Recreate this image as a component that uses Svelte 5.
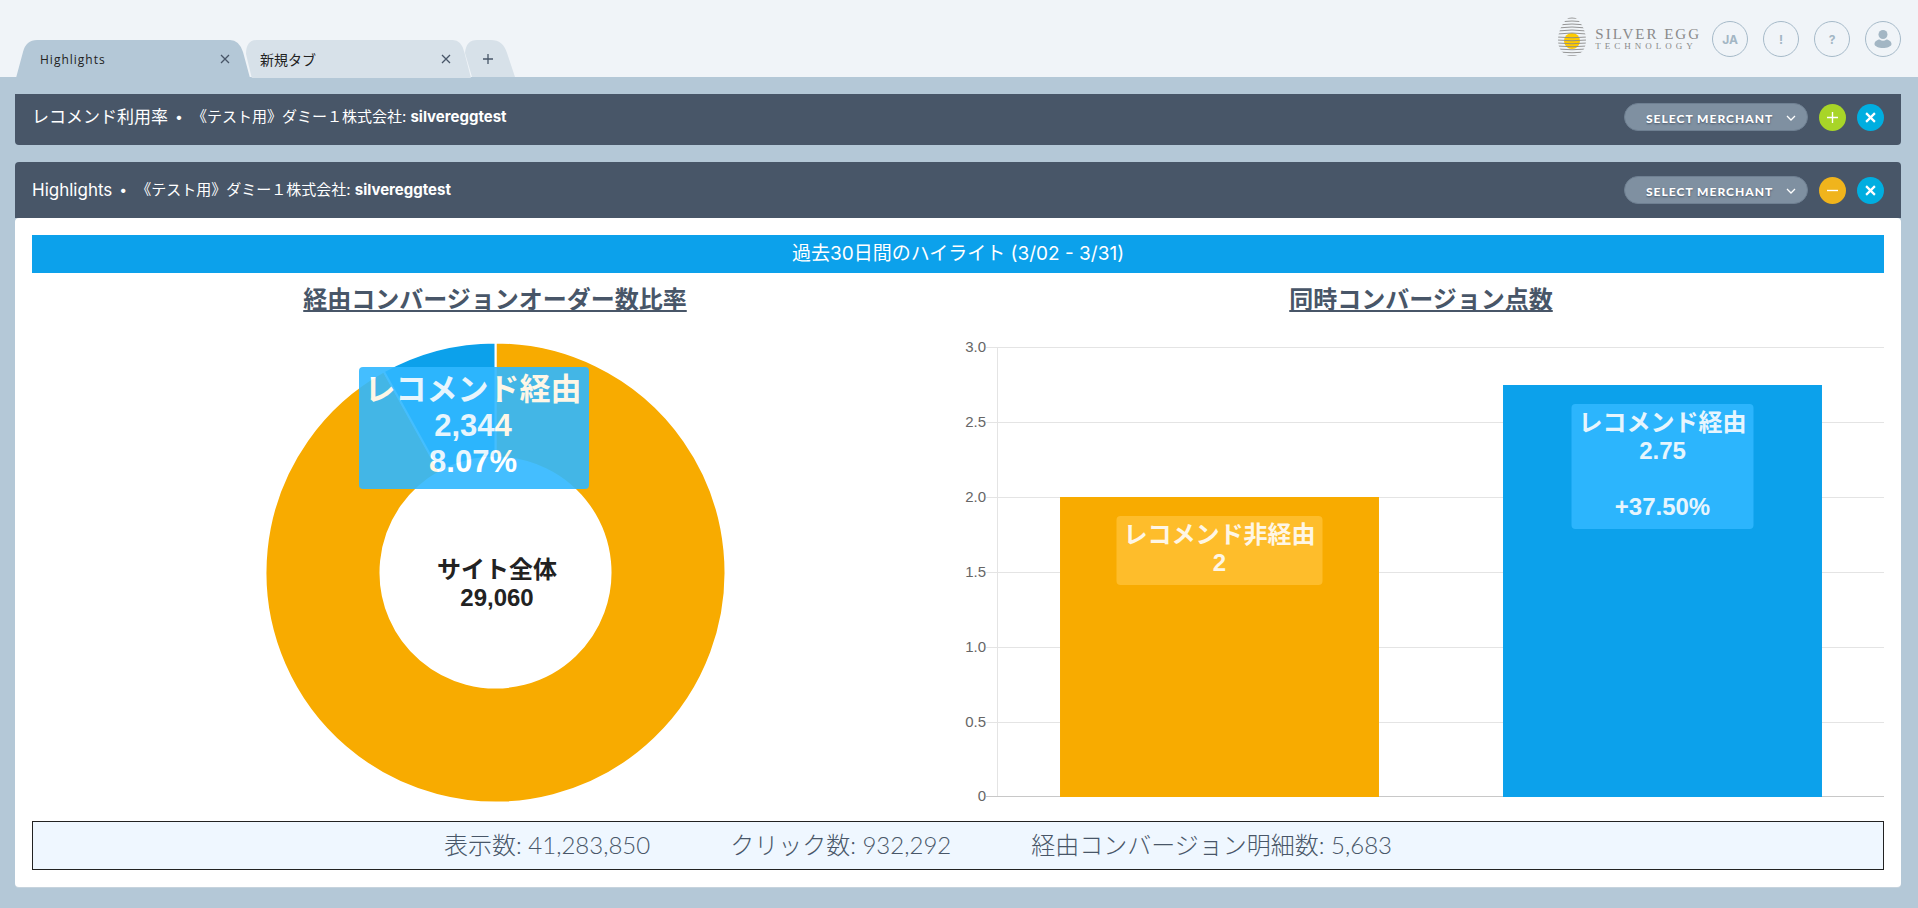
<script lang="ts">
type Summary = { label: string; value: number };
type Bar = { label: string; value: number; diff?: string; color: string; tip: string };

const CX = 463.5;
const CY = 251.5;
const OUTER_R = 230;
const INNER_R = 115;

const PLOT_TOP = 26;
const PLOT_BOTTOM = 475;
const PLOT_LEFT = 40;
const PLOT_RIGHT = 926;
const MAX_VALUE = 3;
const BAR_RATIO = 0.72;

const merchant = "《テスト用》ダミー１株式会社:";
const account = "silvereggtest";

const total = 29060;
const recommended = 2344;
const share = recommended / total;

const ticks = [3, 2.5, 2, 1.5, 1, 0.5, 0];

const bars: Bar[] = [
  { label: "レコメンド非経由", value: 2, color: "#f8ab00", tip: "#ffbf30" },
  { label: "レコメンド経由", value: 2.75, diff: "+37.50%", color: "#0ca1eb", tip: "#30b8ff" },
];

const summary: Summary[] = [
  { label: "表示数", value: 41283850 },
  { label: "クリック数", value: 932292 },
  { label: "経由コンバージョン明細数", value: 5683 },
];

let tabs = $state([
  { name: "Highlights", active: true },
  { name: "新規タブ", active: false },
]);

const fmt = (n: number) => n.toLocaleString("en-US");

function yFor(value: number): number {
  return Math.ceil(PLOT_BOTTOM - ((PLOT_BOTTOM - PLOT_TOP) * value) / MAX_VALUE);
}

function point(r: number, turn: number): string {
  const a = turn * 2 * Math.PI - Math.PI / 2;
  return `${(CX + r * Math.cos(a)).toFixed(2)},${(CY + r * Math.sin(a)).toFixed(2)}`;
}

function slice(from: number, to: number): string {
  const large = to - from > 0.5 ? 1 : 0;
  return `M${point(OUTER_R, from)} A${OUTER_R},${OUTER_R} 0 ${large} 1 ${point(OUTER_R, to)} L${point(INNER_R, to)} A${INNER_R},${INNER_R} 0 ${large} 0 ${point(INNER_R, from)} Z`;
}

const slot = (PLOT_RIGHT - PLOT_LEFT) / bars.length;
const barWidth = slot * BAR_RATIO;

function selectTab(index: number) {
  tabs.forEach((t, i) => (t.active = i === index));
}

// stripes of the egg mark, clipped to its outline
const stripes = Array.from({ length: 13 }, (_, i) => 1 + i * 3);
</script>

{#snippet cross()}
  <svg class="glyph" viewBox="0 0 10 10" aria-hidden="true"><path d="M1 1 9 9M9 1 1 9" /></svg>
{/snippet}

{#snippet panelHead(title: string, open: boolean)}
  <h2>
    <span class="title">{title}</span><span class="dot">•</span>
    <span class="merchant">{merchant} <b>{account}</b></span>
  </h2>
  <div class="tools">
    <div class="picker">
      <select aria-label="Select merchant">
        <option>SELECT MERCHANT</option>
      </select>
      <svg class="chevron" viewBox="0 0 10 6" aria-hidden="true"><path d="M1 1 5 5 9 1" /></svg>
    </div>
    {#if open}
      <button class="round amber" aria-label="Collapse">
        <svg viewBox="0 0 12 12" aria-hidden="true"><path d="M0 6H12" /></svg>
      </button>
    {:else}
      <button class="round green" aria-label="Expand">
        <svg viewBox="0 0 12 12" aria-hidden="true"><path d="M0 6H12M6 0V12" /></svg>
      </button>
    {/if}
    <button class="round blue" aria-label="Close panel">{@render cross()}</button>
  </div>
{/snippet}

<header>
  <nav class="tabs">
    {#each tabs as tab, i}
      <div class="tab" class:active={tab.active}>
        <svg class="shape" viewBox="0 0 234 38" preserveAspectRatio="none" aria-hidden="true">
          {#if i === 0}
            <path d="M0 38 7 12Q10 0 21 0H214Q223 0 227 12L234 38Z" />
          {:else}
            <path d="M6 38 0 14Q0 0 11 0H215Q224 0 227 12L234 38Z" />
          {/if}
        </svg>
        <button class="name" onclick={() => selectTab(i)}>{tab.name}</button>
        <button class="close" aria-label="Close tab">{@render cross()}</button>
      </div>
    {/each}
    <button class="tab add" aria-label="Add tab">
      <svg class="shape" viewBox="0 0 50 38" preserveAspectRatio="none" aria-hidden="true">
        <path d="M7 37 0 13Q1 0 12 0H26Q38 0 42 13L50 37Z" />
      </svg>
      <svg class="glyph" viewBox="0 0 10 10" aria-hidden="true"><path d="M0 5H10M5 0V10" /></svg>
    </button>
  </nav>

  <div class="account">
    <a class="logo" href="#home" aria-label="Silver Egg Technology">
      <svg class="egg" viewBox="0 0 30 40" aria-hidden="true">
        <defs>
          <clipPath id="egg-outline">
            <path d="M15 0C22 0 29 13 29 23C29 33 23 39 15 39S1 33 1 23C1 13 8 0 15 0Z" />
          </clipPath>
        </defs>
        <circle cx="15" cy="24" r="8" fill="#ffcb00" />
        <g clip-path="url(#egg-outline)">
          {#each stripes as y, i}
            <path class="stripe" d="M0 {y + 1}Q15 {y + (i < 6 ? -1 : 2.5)} 30 {y + 1}" />
          {/each}
        </g>
      </svg>
      <span class="brand">
        <span class="brand-top">SILVER EGG</span>
        <span class="brand-sub">TECHNOLOGY</span>
      </span>
    </a>
    <button class="ring">JA</button>
    <button class="ring">!</button>
    <button class="ring">?</button>
    <button class="ring" aria-label="User">
      <svg class="user" viewBox="0 0 18 18" aria-hidden="true">
        <circle cx="9" cy="4.5" r="4.5" />
        <path d="M0.5 14C0.5 11 4 9.5 5.5 9.5Q9 12 12.5 9.5C14 9.5 17.5 11 17.5 14C17.5 16.5 13 18 9 18S0.5 16.5 0.5 14Z" />
      </svg>
    </button>
  </div>
</header>

<main>
  <section class="panel collapsed">
    <div class="head">{@render panelHead("レコメンド利用率", false)}</div>
  </section>

  <section class="panel">
    <div class="head">{@render panelHead("Highlights", true)}</div>
    <div class="body">
      <div class="banner">過去30日間のハイライト (3/02 - 3/31)</div>

      <div class="charts">
        <div class="chart">
          <h3>経由コンバージョンオーダー数比率</h3>
          <svg viewBox="0 0 926 500" role="img" aria-label="経由コンバージョンオーダー数比率">
            <path class="slice" d={slice(0, 1 - share)} fill="#f8ab00" />
            <path class="slice" d={slice(1 - share, 1)} fill="#0ca1eb" />
            <g class="center">
              <text x="465" y="257">サイト全体</text>
              <text x="465" y="285">{fmt(total)}</text>
            </g>
            <g class="tip large">
              <rect x="327" y="46" width="230" height="122" rx="4" fill="#30b8ff" />
              <text x="441" y="79">レコメンド経由</text>
              <text x="441" y="115">{fmt(recommended)}</text>
              <text x="441" y="151">{(share * 100).toFixed(2)}%</text>
            </g>
          </svg>
        </div>

        <div class="chart">
          <h3>同時コンバージョン点数</h3>
          <svg viewBox="0 0 926 500" role="img" aria-label="同時コンバージョン点数">
            {#each ticks as tick}
              {@const y = yFor(tick) + 0.5}
              <line class={tick === 0 ? "grid base" : "grid"} x1="28" x2={PLOT_RIGHT} y1={y} y2={y} />
              <text class="tick" x="28" y={y + 4}>{tick === 0 ? "0" : tick.toFixed(1)}</text>
            {/each}
            <line class="grid" x1="39.5" x2="39.5" y1={PLOT_TOP} y2={PLOT_BOTTOM} />
            {#each bars as bar, i}
              {@const mid = PLOT_LEFT + slot * (i + 0.5)}
              {@const top = yFor(bar.value)}
              {@const tipWidth = bar.label.length * 24 + 14}
              <rect x={mid - barWidth / 2} y={top} width={barWidth} height={PLOT_BOTTOM - top + 1} fill={bar.color} />
              <g class="tip">
                <rect
                  x={mid - tipWidth / 2}
                  y={top + 19}
                  width={tipWidth}
                  height={bar.diff ? 125 : 69}
                  rx="4"
                  fill={bar.tip}
                />
                <text x={mid} y={top + 46}>{bar.label}</text>
                <text x={mid} y={top + 74}>{bar.value}</text>
                {#if bar.diff}
                  <text x={mid} y={top + 130}>{bar.diff}</text>
                {/if}
              </g>
            {/each}
          </svg>
        </div>
      </div>

      <div class="summary">
        {#each summary as item}
          <span>{item.label}: {fmt(item.value)}</span>
        {/each}
      </div>
    </div>
  </section>
</main>

<style>
  :global(body) {
    background: #b4c8d7;
    color: #485668;
    font-family: Inter, "Noto Sans CJK JP", sans-serif;
  }

  button,
  select {
    border: 0;
    padding: 0;
    margin: 0;
    background: none;
    color: inherit;
    font-family: inherit;
    cursor: pointer;
  }

  h2,
  h3 {
    margin: 0;
    font-weight: 400;
  }

  header {
    display: flex;
    justify-content: space-between;
    height: 77px;
    padding: 0 17px 0 16px;
    background: #f0f4f8;
    box-sizing: border-box;
  }

  .tabs {
    display: flex;
    align-items: flex-end;
    margin-bottom: -1px;
  }

  .tab {
    position: relative;
    display: flex;
    align-items: center;
    justify-content: space-between;
    width: 234px;
    height: 38px;
    padding: 0 20px 0 24px;
    box-sizing: border-box;
    color: #222;
    fill: #d7e1e9;
  }

  .tab + .tab {
    width: 225px;
    margin-left: -4px;
    padding: 0 20px 0 14px;
  }

  .tab.active {
    fill: #b4c8d7;
  }

  .tab + .tab.add {
    justify-content: center;
    width: 50px;
    margin-left: -6px;
    padding: 0 4px 0 0;
  }

  .shape {
    position: absolute;
    inset: 0;
    width: 100%;
    height: 100%;
  }

  .name {
    position: relative;
    font-family: "Open Sans", "Noto Sans CJK JP", sans-serif;
    font-size: 12px;
    letter-spacing: 1px;
  }

  .tab + .tab .name {
    font-size: 14px;
    letter-spacing: 0;
  }

  .close {
    display: flex;
    position: relative;
  }

  .glyph {
    position: relative;
    width: 10px;
    height: 10px;
    fill: none;
    stroke: #485668;
    stroke-width: 1.3;
  }

  .account {
    display: flex;
    align-items: center;
    gap: 15px;
    height: 78px;
  }

  .logo {
    display: flex;
    align-items: center;
    gap: 8px;
    margin-right: -4px;
    text-decoration: none;
    color: #8a8a8a;
  }

  .egg {
    width: 30px;
    height: 40px;
    margin-top: -4px;
  }

  .stripe {
    fill: none;
    stroke: #8a8a8a;
    stroke-width: 0.9;
  }

  .brand {
    display: flex;
    flex-direction: column;
    font-family: "Liberation Serif", serif;
  }

  .brand-top {
    font-size: 15px;
    line-height: 13px;
    letter-spacing: 2px;
  }

  .brand-sub {
    font-size: 9px;
    line-height: 10px;
    letter-spacing: 4px;
  }

  .ring {
    display: flex;
    align-items: center;
    justify-content: center;
    width: 36px;
    height: 36px;
    border: 1px solid #a6bac9;
    border-radius: 50%;
    color: #a3b6c4;
    font-size: 12px;
    font-weight: 700;
  }

  .user {
    width: 18px;
    height: 18px;
    fill: #a3b6c4;
  }

  main {
    display: flex;
    flex-direction: column;
    gap: 17px;
    padding: 17px 17px 21px 15px;
  }

  .head {
    display: flex;
    align-items: center;
    justify-content: space-between;
    height: 56px;
    padding: 0 17px;
    border-radius: 4px 4px 0 0;
    background: #485668;
    color: #fff;
  }

  .collapsed .head {
    height: 46px;
    padding-bottom: 5px;
    border-radius: 0 0 4px 4px;
  }

  h2 {
    display: flex;
    align-items: center;
    line-height: 24px;
  }

  .title {
    font-size: 17px;
  }

  .dot {
    margin: 0 9px 0 7px;
    font-size: 14px;
  }

  .merchant,
  .merchant b {
    font-size: 15px;
  }

  .tools {
    display: flex;
    align-items: center;
    gap: 11px;
  }

  .picker {
    position: relative;
  }

  select {
    display: block;
    appearance: none;
    width: 184px;
    height: 28px;
    padding: 2px 24px 0 21px;
    border: 1px solid #6f8092;
    border-radius: 14px;
    background: #7f90a1;
    color: #fff;
    font-family: Lato, sans-serif;
    font-size: 12px;
    font-weight: 900;
    letter-spacing: 1px;
    text-shadow: 0 1px 2px #485668;
  }

  .chevron {
    position: absolute;
    top: 12px;
    right: 12px;
    width: 10px;
    height: 6px;
    fill: none;
    stroke: #fff;
    stroke-width: 1.3;
    pointer-events: none;
  }

  .round {
    display: flex;
    align-items: center;
    justify-content: center;
    width: 27px;
    height: 27px;
    border-radius: 50%;
  }

  .round svg {
    width: 11px;
    height: 11px;
    fill: none;
    stroke: #fff;
    stroke-width: 1.5;
  }

  .round .glyph {
    stroke-width: 2;
  }

  .green {
    background: #a8d528;
  }

  .amber {
    background: #f0b41c;
  }

  .blue {
    background: #00aee0;
  }

  .body {
    padding: 17px;
    border-radius: 4px;
    background: #fff;
    box-shadow: 0 1px 0 #c6d3dd;
  }

  .banner {
    background: #0ca1eb;
    color: #fff;
    font-size: 19px;
    line-height: 38px;
    text-align: center;
  }

  .charts {
    display: grid;
    grid-template-columns: 1fr 1fr;
  }

  h3 {
    padding: 11px 0 5px;
    font-size: 24px;
    font-weight: 700;
    line-height: 32px;
    text-align: center;
    text-decoration: underline;
    text-decoration-thickness: 2px;
    text-underline-offset: 2px;
  }

  .chart > svg {
    display: block;
    width: 100%;
    font-family: "Liberation Sans", "Noto Sans CJK JP", sans-serif;
  }

  .slice {
    stroke: #fff;
    stroke-width: 2;
  }

  .center {
    fill: #222;
    font-size: 24px;
    font-weight: 700;
    text-anchor: middle;
  }

  .tip {
    font-size: 24px;
    font-weight: 700;
    text-anchor: middle;
    opacity: 0.9;
  }

  .tip.large {
    font-size: 31px;
  }

  .tip text {
    fill: #fff;
  }

  .grid {
    stroke: #e4e4e4;
    stroke-width: 1;
  }

  .base {
    stroke: #c8c8c8;
  }

  .tick {
    fill: #666;
    font-size: 15px;
    text-anchor: end;
  }

  .summary {
    display: flex;
    justify-content: center;
    padding-bottom: 2px;
    border: 1px solid #222;
    background: #eff7ff;
    font-family: Lato, "Noto Sans CJK JP", sans-serif;
    font-size: 24px;
    font-weight: 300;
    line-height: 45px;
  }

  .summary span {
    margin-right: 80px;
  }
</style>
